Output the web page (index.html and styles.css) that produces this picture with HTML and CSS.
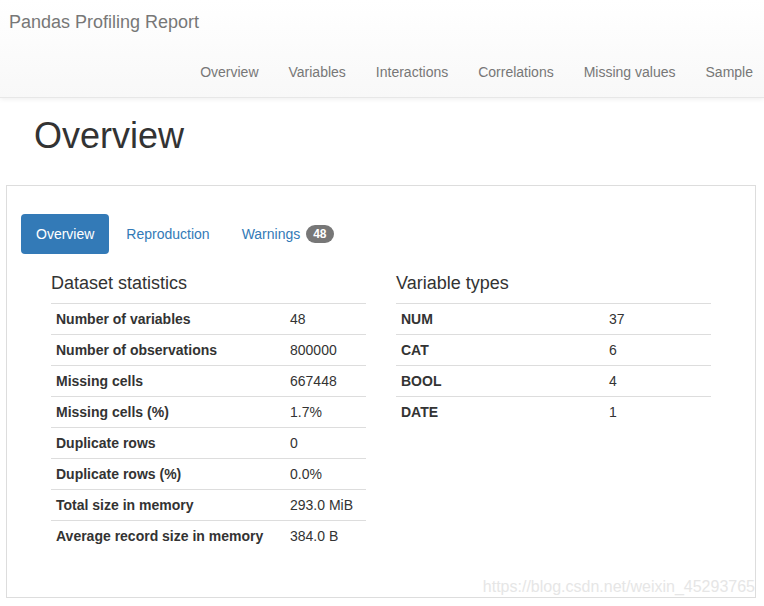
FILE: index.html
```html
<!DOCTYPE html>
<html lang="en">
<head>
	<meta charset="utf-8" />
	<title>Pandas Profiling Report</title>
	<link rel="stylesheet" href="styles.css">
</head>
<body>
	<nav class="navbar">
		<div class="brand">Pandas Profiling Report</div>
		<ul class="nav-links">
			<li>Overview</li>
			<li>Variables</li>
			<li>Interactions</li>
			<li>Correlations</li>
			<li>Missing values</li>
			<li>Sample</li>
		</ul>
	</nav>

	<h1 class="page-title">Overview</h1>

	<div class="panel">
		<ul class="pills">
			<li class="active">Overview</li>
			<li>Reproduction</li>
			<li>Warnings <span class="badge">48</span></li>
		</ul>

		<div class="tab-content">
			<div class="col">
				<h4>Dataset statistics</h4>
				<table class="stats">
					<tr><th class="wide-left">Number of variables</th><td>48</td></tr>
					<tr><th>Number of observations</th><td>800000</td></tr>
					<tr><th>Missing cells</th><td>667448</td></tr>
					<tr><th>Missing cells (%)</th><td>1.7%</td></tr>
					<tr><th>Duplicate rows</th><td>0</td></tr>
					<tr><th>Duplicate rows (%)</th><td>0.0%</td></tr>
					<tr><th>Total size in memory</th><td>293.0 MiB</td></tr>
					<tr><th>Average record size in memory</th><td>384.0 B</td></tr>
				</table>
			</div>
			<div class="col">
				<h4>Variable types</h4>
				<table class="stats">
					<tr><th class="wide-right">NUM</th><td>37</td></tr>
					<tr><th>CAT</th><td>6</td></tr>
					<tr><th>BOOL</th><td>4</td></tr>
					<tr><th>DATE</th><td>1</td></tr>
				</table>
			</div>
		</div>
	</div>

	<div class="watermark">https://blog.csdn.net/weixin_45293765</div>
</body>
</html>
```

FILE: styles.css
```css
body
{
	margin: 0;
	background-color: #FFFFFF;
	font-family: "Liberation Sans", Arial, sans-serif;
	font-size: 14px;
	line-height: 20px;
	color: #333333;
	position: relative;
	min-height: 606px;
	overflow: hidden;
}

/* top bar */
.navbar
{
	height: 97px;
	background-image: linear-gradient(to bottom, #FFFFFF 0, #F8F8F8 100%);
	border-bottom: 1px solid #E7E7E7;
	box-shadow: 0 1px 5px rgba(0, 0, 0, 0.075);
}

	.navbar .brand
	{
		padding: 12px 9px 15px;
		font-size: 18px;
		line-height: 20px;
		color: #777777;
	}

	.navbar .nav-links
	{
		display: flex;
		justify-content: flex-end;
		margin: 0 -4px 0 0;
		padding: 0;
		list-style: none;
	}

		.navbar .nav-links li
		{
			padding: 15px 15px;
			color: #777777;
		}

.page-title
{
	margin: 18px 0 29px 34px;
	font-size: 36px;
	font-weight: 500;
	line-height: 40px;
	color: #333333;
}

/* tabbed panel */
.panel
{
	margin: 0 8px 0 6px;
	border: 1px solid #DDDDDD;
	padding: 28px 14px 46px;
}

.pills
{
	display: flex;
	margin: 0;
	padding: 0;
	list-style: none;
}

	.pills li
	{
		margin-right: 2px;
		padding: 10px 15px;
		border-radius: 4px;
		color: #337AB7;
	}

		.pills li.active
		{
			background-color: #337AB7;
			color: #FFFFFF;
		}

	.pills .badge
	{
		display: inline-block;
		margin-left: 2px;
		padding: 3px 7px;
		min-width: 10px;
		border-radius: 10px;
		background-color: #777777;
		color: #FFFFFF;
		font-size: 12px;
		font-weight: bold;
		line-height: 1;
		vertical-align: 1px;
	}

.tab-content
{
	display: flex;
	gap: 30px;
	padding: 0 30px;
}

	.tab-content .col
	{
		flex: 1;
	}

	.tab-content h4
	{
		margin: 20px 0 9px;
		font-size: 18px;
		font-weight: 500;
		line-height: 1.1;
	}

table.stats
{
	width: 100%;
	border-collapse: collapse;
}

	table.stats th, table.stats td
	{
		padding: 5px;
		text-align: left;
		border-top: 1px solid #DDDDDD;
		vertical-align: top;
	}

	table.stats th
	{
		font-weight: bold;
	}

	table.stats th.wide-left
	{
		width: 224px;
	}

	table.stats th.wide-right
	{
		width: 198px;
	}

.watermark
{
	position: absolute;
	right: 9px;
	bottom: 9px;
	font-size: 16px;
	color: #E6E6E6;
}
```
